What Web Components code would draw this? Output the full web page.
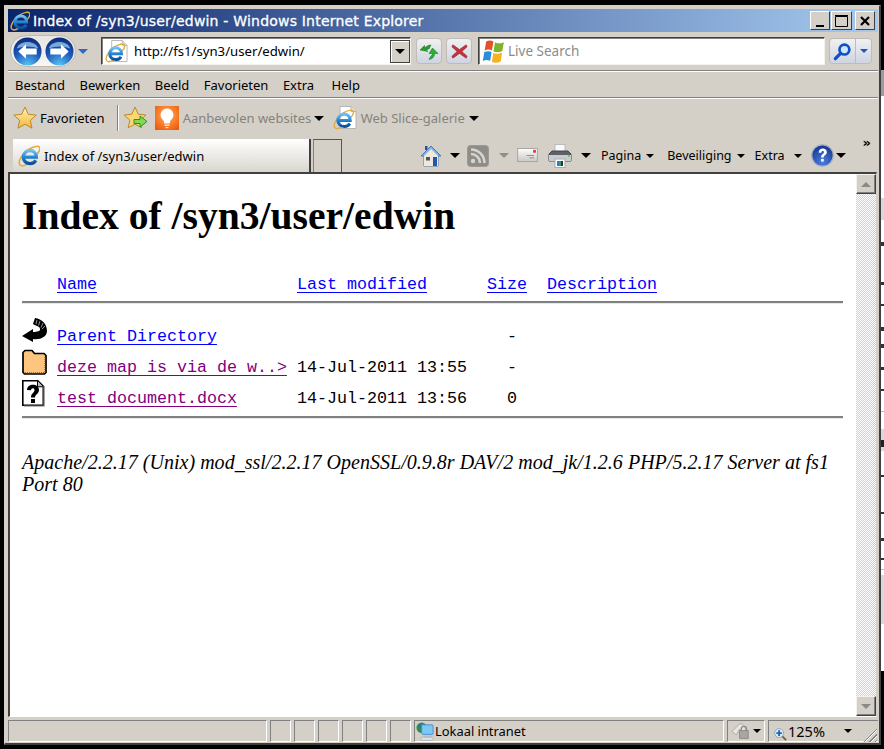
<!DOCTYPE html>
<html><head><meta charset="utf-8"><title>Index of /syn3/user/edwin</title>
<style>html,body{margin:0;padding:0;background:#000;height:749px;overflow:hidden}</style></head>
<body>
<ie-backdrop></ie-backdrop>
<ie-window>
  <ie-titlebar slot="chrome">Index of /syn3/user/edwin - Windows Internet Explorer</ie-titlebar>
  <ie-navbar slot="chrome"></ie-navbar>
  <ie-menubar slot="chrome"></ie-menubar>
  <ie-favbar slot="chrome"></ie-favbar>
  <ie-tabbar slot="chrome"></ie-tabbar>
  <ie-listing slot="content"></ie-listing>
  <ie-statusbar slot="status"></ie-statusbar>
</ie-window>
<script>
const E=(c)=>`<path d="M2 21.500C-.5 18 5 9 12 4.500c5-3 10.500-4 11.500-2 1 2-1 5.500-3 7.500" fill="none" stroke="#e3ad3a" stroke-width="1.700"/><path d="M2 21.500c1.500 2 5.500 1 8.500-1" fill="none" stroke="#e3ad3a" stroke-width="1.700"/><path d="M7 13.300h13c0-5-3.500-7.300-7-7.300-4 0-7.300 3.300-7.300 7.300 0 4 3.300 7 7.500 7 3 0 5-1.200 6.300-3.500" fill="none" stroke="${c}" stroke-width="3.600"/>`;
const GRAD=`<defs><linearGradient id="e" x1="0" y1="0" x2="0" y2="1"><stop offset="0" stop-color="#6fc0f0"/><stop offset=".55" stop-color="#1f7fd0"/><stop offset="1" stop-color="#0d4f9c"/></linearGradient><radialGradient id="b" cx=".5" cy="1" r="1"><stop offset="0" stop-color="#58c8f7"/><stop offset=".55" stop-color="#1d58b8"/><stop offset="1" stop-color="#0b2a78"/></radialGradient></defs>`;
const ICONS = {
ie:`<svg viewBox="0 0 24 24" width="100%" height="100%">${GRAD}${E('url(#e)')}</svg>`,
iepage:`<svg viewBox="0 0 24 24" width="100%" height="100%">${GRAD}<path d="M7 .5h11l5 5v17H7z" fill="#fff" stroke="#b5b5b5"/><path d="M18 .5v5h5" fill="#e4e4e4" stroke="#b5b5b5"/><g transform="translate(0 3) scale(.86)">${E('url(#e)')}</g></svg>`,
star:`<svg viewBox="0 0 24 24" width="100%" height="100%"><defs><linearGradient id="s" x1="0" y1="0" x2="0" y2="1"><stop offset="0" stop-color="#fff2b0"/><stop offset="1" stop-color="#f6b73c"/></linearGradient></defs><path d="M12 1l3.300 7.300 7.900.8-5.900 5.300 1.700 7.800L12 18.200l-7 4 1.700-7.800L.8 9.100l7.900-.8z" fill="url(#s)" stroke="#b98a2c" stroke-linejoin="round"/></svg>`,
staradd:`<svg viewBox="0 0 24 24" width="100%" height="100%"><path d="M11 1l3.200 7.200 7.700.8-5.800 5.200 1.600 7.600L11 18.100l-6.800 3.700 1.700-7.600L.1 9l7.700-.8z" fill="#fbd872" stroke="#b98a2c" stroke-linejoin="round"/><path d="M10 13.500h6V10l7 5.500-7 5.500v-3.500h-6z" fill="#7fdc4a" stroke="#2f8f24"/></svg>`,
bulb:`<svg viewBox="0 0 24 24" width="100%" height="100%"><defs><radialGradient id="o" cx=".5" cy=".4" r=".7"><stop offset="0" stop-color="#ffb060"/><stop offset="1" stop-color="#ef5a08"/></radialGradient></defs><rect width="24" height="24" fill="url(#o)"/><path d="M12 2.500a6.500 6.500 0 0 1 4 11.500c-1 1-1 2-1.200 3.500H9.200C9 16 9 15 8 14A6.500 6.500 0 0 1 12 2.500z" fill="#fff"/><rect x="9.500" y="18.500" width="5" height="1.500" fill="#ffe0c4"/><rect x="10.500" y="21" width="3" height="1.200" fill="#ffe0c4"/></svg>`,
flag:`<svg viewBox="0 0 24 24" width="100%" height="100%"><path d="M4 2.500c3-1.500 5-1 7 0l-1.500 8.500c-2-1-4-1.200-7 0z" fill="#e2532a"/><path d="M12.500 3c3 1.500 5 1.500 8.500 0L19.500 11.500c-3 1.500-5.500 1.500-8.500.5z" fill="#7db52a"/><path d="M2.200 12.500c3-1.200 5-1 7 0L7.800 21c-2-1-4-1.200-7 0z" fill="#2a8fd8"/><path d="M10.800 13.500c3 1 5 1 8.500-.5L18 21.500c-3 1.500-6 1.500-8.500.5z" fill="#f6b21f"/></svg>`,
back:`<svg viewBox="0 0 30 30" width="100%" height="100%">${GRAD}<circle cx="15" cy="15" r="14.500" fill="url(#b)"/><path d="M4 12C6 3 24 3 26 12 20 9 10 9 4 12z" fill="#9ec9f2" opacity=".75"/><path d="M5.500 15l8-7.500v4.500h11v6h-11v4.500z" fill="#fff"/></svg>`,
fwd:`<svg viewBox="0 0 30 30" width="100%" height="100%">${GRAD}<circle cx="15" cy="15" r="14.500" fill="url(#b)"/><path d="M4 12C6 3 24 3 26 12 20 9 10 9 4 12z" fill="#9ec9f2" opacity=".75"/><path d="M24.500 15l-8-7.500v4.500h-11v6h11v4.500z" fill="#fff"/></svg>`,
refresh:`<svg viewBox="0 0 20 20" width="100%" height="100%"><path d="M1 9l4.500-4.500.5 2.500c1.500-2 3.500-3 6-3L10 8c-1 0-2 .4-2.500 1.400l1.500 1.100z" fill="#2c9b2c" stroke="#176b17" stroke-width=".5"/><path d="M13.500 7L19 12.500h-3.300c-.2 3-2 5.500-5.700 6l2-3.500c1-.5 1.400-1.500 1.500-2.500H10z" fill="#26b233" stroke="#176b17" stroke-width=".5"/></svg>`,
stop:`<svg viewBox="0 0 20 20" width="100%" height="100%"><path d="M3 3l7 5 7-5 1 2-5.500 5 5.500 5-1 2-7-5-7 5-1-2 5.500-5L2 5z" fill="#c5343a" stroke="#8c1d22" stroke-width=".6"/></svg>`,
search:`<svg viewBox="0 0 20 20" width="100%" height="100%"><circle cx="12" cy="8" r="5.200" fill="#cfe6ff" stroke="#0f50c8" stroke-width="2.800"/><path d="M8 12l-5.500 5.500" stroke="#0f50c8" stroke-width="3.500" stroke-linecap="round"/></svg>`,
home:`<svg viewBox="0 0 22 22" width="100%" height="100%"><path d="M5 1h2.500v4H5z" fill="#2b4fb0"/><path d="M11 1L1 11h3v10h14V11h3z" fill="#7fb2e6" stroke="#5178a8"/><path d="M4 11l7-7 7 7v10H4z" fill="#eee9dc"/><rect x="6" y="12" width="4" height="3.500" fill="#555"/><rect x="13" y="12" width="4" height="9" fill="#2456b0"/></svg>`,
rss:`<svg viewBox="0 0 22 22" width="100%" height="100%"><rect x=".5" y=".5" width="21" height="21" rx="3" fill="#8f8d87" stroke="#9b9992"/><circle cx="6" cy="16" r="2.200" fill="#d6d4cf"/><path d="M4 9a9 9 0 0 1 9 9M4 4.500a13.500 13.500 0 0 1 13.500 13.500" fill="none" stroke="#d6d4cf" stroke-width="2.600"/></svg>`,
mail:`<svg viewBox="0 0 22 16" width="100%" height="100%"><defs><linearGradient id="m" x1="0" y1="0" x2="0" y2="1"><stop offset="0" stop-color="#fff"/><stop offset="1" stop-color="#c9c7c2"/></linearGradient></defs><rect x=".5" y=".5" width="21" height="14" fill="url(#m)" stroke="#a5a39f"/><rect x="17" y="2" width="3" height="3" fill="#e33"/><path d="M10 8h8M13 10.500h5" stroke="#8b8b8b"/></svg>`,
print:`<svg viewBox="0 0 24 24" width="100%" height="100%"><rect x="7" y=".5" width="10" height="9" fill="#fafafa" stroke="#bbb"/><path d="M1 10l3-3h16l3 3v7H1z" fill="#5d6169" stroke="#44474d"/><rect x="1" y="11" width="22" height="6" fill="#c8cdd2"/><rect x="20" y="11" width="2" height="2" fill="#6fd24a"/><rect x="7" y="15" width="10" height="8.500" fill="#fff" stroke="#aaa"/><rect x="9" y="17" width="2" height="5" fill="#2a7fc0"/><rect x="11" y="17" width="2" height="5" fill="#2a9a70"/><rect x="13" y="17" width="2" height="5" fill="#333"/></svg>`,
help:`<svg viewBox="0 0 24 24" width="100%" height="100%"><defs><radialGradient id="h" cx=".5" cy=".8" r=".8"><stop offset="0" stop-color="#4a7fe0"/><stop offset="1" stop-color="#12328f"/></radialGradient></defs><circle cx="12" cy="12" r="11.200" fill="url(#h)" stroke="#a9b0bd" stroke-width="1.300"/><path d="M8 9c0-5.500 8.500-5.500 8.500-.5 0 3-3.200 3-3.200 5.500h-2.800c0-3.500 3-3.700 3-5.500 0-1.800-2.700-1.600-2.700.5z" fill="#fff"/><rect x="10.500" y="15.500" width="2.800" height="2.800" fill="#fff"/></svg>`,
net:`<svg viewBox="0 0 20 20" width="100%" height="100%"><circle cx="6" cy="6" r="5.500" fill="#2f8f4e"/><path d="M3 3c2-1 4 0 4 2s-3 2-4 1z" fill="#2a6fd0"/><rect x="6" y="3" width="12" height="10" rx="1" fill="#7cc8f5" stroke="#4a90c8"/><rect x="8" y="14" width="9" height="2" fill="#b8c4cf"/><rect x="5" y="16" width="13" height="3.500" rx="1" fill="#d9dfe5" stroke="#8b98a5" stroke-width=".5"/></svg>`,
lock:`<svg viewBox="0 0 22 20" width="100%" height="100%"><path d="M1 10l9-9c5 0 7 4 7 9h-4l-3-3-4 7z" fill="#e9e7e2" stroke="#a5a39e"/><path d="M12 9V7a3 3 0 0 1 6 0v2" fill="none" stroke="#8e8c87" stroke-width="1.600"/><rect x="10" y="9" width="10" height="9" fill="#a8a6a0" stroke="#85837e"/></svg>`,
zoom:`<svg viewBox="0 0 14 14" width="100%" height="100%"><circle cx="5.500" cy="5.500" r="4.800" fill="#dfeaf5" stroke="#8fa5bb"/><path d="M5.500 2.500v6M2.500 5.500h6" stroke="#1768c4" stroke-width="2"/><path d="M9 9l4 4" stroke="#8a5a2b" stroke-width="2"/></svg>`
};
class Base extends HTMLElement{
  render(css,html){this.attachShadow({mode:'open'}).innerHTML=`<style>${css}</style>${html}`;}
}
customElements.define('ie-backdrop',class extends Base{connectedCallback(){
  const band=(a,b,c)=>`linear-gradient(${c},${c}) 0 ${a-70}px/100% ${b-a}px no-repeat`;
  const bg=[[242,246,'#333'],[282,285,'#333'],[304,306,'#333'],[327,331,'#333'],[344,348,'#333'],[367,370,'#333'],[389,391,'#333'],[411,412,'#bbb'],[440,447,'#222'],[475,477,'#333'],[512,514,'#333'],[538,541,'#333'],[558,560,'#333'],[569,570,'#bbb'],[70,96,'#9c9c9c'],[198,220,'#d8d8d8'],[429,451,'#d8d8d8'],[575,624,'#d8d8d8']].map(x=>band(...x)).join(',');
  this.render(`:host{display:block;position:absolute;left:881px;top:70px;width:3px;height:601px;background:${bg},#fff}`,'');
}});
customElements.define('ie-icon',class extends Base{connectedCallback(){
  const w=this.getAttribute('w')||24,h=this.getAttribute('h')||w;
  this.render(`:host{display:block;flex:none;width:${w}px;height:${h}px}`,ICONS[this.getAttribute('name')]);
}});
customElements.define('ie-caret',class extends Base{connectedCallback(){
  const c=this.getAttribute('c')||'#000',s=+(this.getAttribute('s')||5);
  this.render(`:host{display:block;flex:none;width:0;height:0;border-left:${s}px solid transparent;border-right:${s}px solid transparent;border-top:${s}px solid ${c}}`,'');
}});
customElements.define('ie-window',class extends Base{connectedCallback(){
  this.render(`:host{display:flex;position:relative;box-sizing:border-box;width:877px;height:740px;margin:5px 0 0 4px;background:#d4d0c8;border-top:1px solid #d4d0c8;border-left:1px solid #d4d0c8;border-right:2px solid #404040;border-bottom:2px solid #404040;padding:3px 1px 1px 3px;flex-direction:column;font-family:"DejaVu Sans","Liberation Sans",sans-serif}
  .content{flex:none;box-sizing:border-box;height:545px;display:flex;margin:0 1px 3px 0;border-top:2px solid #404040;border-left:2px solid #404040;background:#fff;border-right:1px solid #d4d0c8;border-bottom:1px solid #fff}
  .main{flex:1;min-width:0}
  .bar{flex:none;width:20px;display:flex;flex-direction:column;justify-content:space-between;background:repeating-conic-gradient(#d4d0c8 0 25%,#fff 0 50%) 0 0/2px 2px}
  .btn{height:20px;box-sizing:border-box;background:#d4d0c8;border:1px solid;border-color:#f4f2ee #404040 #404040 #f4f2ee;box-shadow:inset -1px -1px 0 #808080;display:flex;align-items:center;justify-content:center}
  .up{border-left:5px solid transparent;border-right:5px solid transparent;border-bottom:5px solid #8b8983}
  .dn{border-left:5px solid transparent;border-right:5px solid transparent;border-top:5px solid #8b8983}`,
  `<slot name="chrome"></slot><div class="content"><div class="main"><slot name="content"></slot></div><div class="bar"><div class="btn"><i class="up"></i></div><div class="btn"><i class="dn"></i></div></div></div><slot name="status"></slot>`);
}});
customElements.define('ie-titlebar',class extends Base{connectedCallback(){
  this.render(`:host{display:flex;align-items:center;height:23px;background:linear-gradient(90deg,#0a246a,#a6caf0);color:#fff;font-size:14px;padding-left:2px}
  .t{margin-left:3px;flex:1;letter-spacing:.2px;white-space:nowrap;-webkit-text-stroke:.3px #fff}
  .b{width:20px;height:19px;box-sizing:border-box;background:#d4d0c8;border:1px solid;border-color:#fff #404040 #404040 #fff;margin-left:1px;display:flex;align-items:center;justify-content:center;color:#000}
  .btns{display:flex;margin-right:3px}.b:nth-child(2){margin-right:2px;width:21px}
  svg{display:block}`,
  `<ie-icon name="ie" w="20"></ie-icon><span class="t"><slot></slot></span><div class="btns"><div class="b"><svg width="14" height="14"><rect x="3" y="11" width="8" height="2"/></svg></div><div class="b"><svg width="15" height="14"><path d="M1.500 2.500h12v10h-12zM1 1.500h13" fill="none" stroke="#000"/></svg></div><div class="b"><svg width="14" height="14"><path d="M3 3l8 8M11 3l-8 8" stroke="#000" stroke-width="2.200"/></svg></div></div>`);
}});
customElements.define('ie-navbar',class extends Base{connectedCallback(){
  this.render(`:host{display:flex;align-items:center;height:38px;padding-left:2px;border-bottom:1px solid #808080;box-shadow:0 1px 0 #fff;margin-bottom:1px}
  .pill{display:flex;gap:3px;align-items:center;box-sizing:border-box;padding:0 2px;background:linear-gradient(#e8e6e2,#f7f6f3);border:1px solid #bdbab3;border-radius:17px;height:32px;width:66px}
  .drop{margin:0 13px 0 2px}
  .sunk{display:flex;align-items:center;box-sizing:border-box;height:28px;background:#fff;border:1px solid;border-color:#404040 #f4f2ee #f4f2ee #404040;box-shadow:inset 1px 1px 0 #808080;font:13.200px "Noto Sans",sans-serif}
  .addr{width:310px;padding-left:3px}.addr span{flex:1;margin-left:6px;white-space:nowrap}
  .dd{width:20px;height:23px;box-sizing:border-box;background:#d4d0c8;border:1px solid #404040;box-shadow:inset 1px 1px 0 #fff;display:flex;align-items:center;justify-content:center}
  .g{display:flex;align-items:center;justify-content:center;box-sizing:border-box;height:26px;width:26px;border:1px solid #bfbcb8;border-radius:4px;background:linear-gradient(#f1f1f1,#cfd4e2)}
  .search{width:347px;padding-left:3px;color:#8b8b8b;margin:0 4px 0 6px}.search span{margin-left:1px;font-size:13.500px}
  .sb{display:flex;height:26px;border:1px solid #bfbcb8;border-radius:4px;box-sizing:border-box;width:43px;background:linear-gradient(#f1f1f1,#cfd4e2)}
  .sb div{display:flex;align-items:center;justify-content:center}.sb div:first-child{width:25px;border-right:1px solid #bfbcb8}.sb div:last-child{flex:1}`,
  `<div class="pill"><ie-icon name="back" w="29"></ie-icon><ie-icon name="fwd" w="29"></ie-icon></div><ie-caret class="drop" c="#2e69c9" s="5"></ie-caret>
  <div class="sunk addr"><ie-icon name="iepage" w="23"></ie-icon><span>http://fs1/syn3/user/edwin/</span><div class="dd"><ie-caret></ie-caret></div></div>
  <div class="g" style="margin-left:5px"><ie-icon name="refresh" w="20"></ie-icon></div><div class="g" style="margin-left:4px"><ie-icon name="stop" w="19"></ie-icon></div>
  <div class="sunk search"><ie-icon name="flag" w="25"></ie-icon><span>Live Search</span></div>
  <div class="sb"><div><ie-icon name="search" w="19"></ie-icon></div><div><ie-caret c="#1556c8" s="4"></ie-caret></div></div>`);
}});
customElements.define('ie-menubar',class extends Base{connectedCallback(){
  this.render(`:host{display:flex;align-items:center;height:25px;padding-left:7px;gap:14.500px;border-bottom:1px solid #808080;box-shadow:0 1px 0 #fff;font:13px "Noto Sans",sans-serif;color:#000}`,
  `<span>Bestand</span><span>Bewerken</span><span>Beeld</span><span>Favorieten</span><span>Extra</span><span style="margin-left:3px">Help</span>`);
}});
customElements.define('ie-favbar',class extends Base{connectedCallback(){
  this.render(`:host{display:flex;align-items:center;height:40px;padding-left:5px;font:13px "Noto Sans",sans-serif;color:#000}
  .sep{width:1px;height:26px;background:#808080;box-shadow:1px 0 0 #fff;margin:0 6px 0 12px}
  .gray{color:#85837e;white-space:nowrap}`,
  `<ie-icon name="star" w="24"></ie-icon><span style="margin-left:3px">Favorieten</span><i class="sep"></i><ie-icon name="staradd" w="24"></ie-icon>
  <ie-icon name="bulb" w="24" style="margin-left:7px"></ie-icon><span class="gray" style="margin-left:4px;width:126px">Aanbevolen websites</span><ie-caret style="margin:0 9px 0 5px"></ie-caret>
  <ie-icon name="iepage" w="24"></ie-icon><span class="gray" style="margin-left:4px;width:103px">Web Slice-galerie</span><ie-caret style="margin-left:5px"></ie-caret>`);
}});
customElements.define('ie-tabbar',class extends Base{connectedCallback(){
  this.render(`:host{display:flex;align-items:flex-end;height:34px;padding-left:5px;font:12.500px "Noto Sans",sans-serif;color:#000}
  .tab{display:flex;align-items:center;box-sizing:border-box;width:298px;height:33px;padding-left:5px;gap:4px;background:linear-gradient(#fff,#d9d6cf);border-right:2px solid #404040;font-size:13px}
  .new{box-sizing:border-box;width:29px;height:33px;margin-left:2px;border:1px solid #555;border-bottom:0;background:#d4d0c8;border-left-color:#808080}
  .tools{display:flex;align-items:center;height:33px;flex:1;padding-left:78px}
  .more{font:700 13px "DejaVu Sans",sans-serif;align-self:flex-start;margin-left:auto;margin-right:7px;line-height:12px;margin-top:-2px}
  .l{white-space:nowrap}`,
  `<div class="tab"><ie-icon name="ie" w="22"></ie-icon><span>Index of /syn3/user/edwin</span></div><div class="new"></div>
  <div class="tools"><ie-icon name="home" w="22"></ie-icon><ie-caret style="margin:0 7px 0 8px"></ie-caret><ie-icon name="rss" w="22"></ie-icon><ie-caret c="#8f8d87" style="margin:0 8px 0 10px"></ie-caret><ie-icon name="mail" w="21" h="15"></ie-icon><ie-icon name="print" w="24" style="margin-left:10px"></ie-icon><ie-caret style="margin:0 10px 0 9px"></ie-caret>
  <span class="l">Pagina</span><ie-caret s="4" style="margin:0 13px 0 5px"></ie-caret><span class="l">Beveiliging</span><ie-caret s="4" style="margin:0 10px 0 5px"></ie-caret><span class="l">Extra</span><ie-caret s="4" style="margin:0 9px 0 9px"></ie-caret><ie-icon name="help" w="23"></ie-icon><ie-caret s="5" style="margin-left:2px"></ie-caret><span class="more">»</span></div>`);
}});
customElements.define('ie-listing',class extends Base{connectedCallback(){
  const ICON2={
   back:`<svg viewBox="0 0 25 27" width="25" height="27"><path d="M0 18L11 11v3c4 0 8-1 7-3 0-3-4-3-7-5l2-6c7 1 12 6 12 13 0 6-7 9-14 8v3z" fill="#000"/><path d="M15 2l-1 4M18 3l-1.500 4.500M21 5l-2 4.500M23 8l-3 3" stroke="#999" stroke-width="1"/></svg>`,
   folder:`<svg viewBox="0 0 25 27" width="25" height="27"><path d="M1 7V3.500L3 1.500h7l2.500 3h9.500l2 2v17l-1.500 1.500H2.500L1 23.500z" fill="#fdc57f" stroke="#000" stroke-width="1.700" stroke-linejoin="round"/><path d="M3 23.500h19M22.800 8v15" stroke="#a06a2c" stroke-dasharray="1 1"/></svg>`,
   q:`<svg viewBox="0 0 23 27" width="23" height="27"><path d="M.8.8h15l5.500 5.500v19H.8z" fill="#fff" stroke="#000" stroke-width="1.600"/><path d="M15.500 1v5.800H21" fill="#bbb" stroke="#000"/><path d="M22 6v20H2" fill="none" stroke="#777" stroke-width="1.200"/><path d="M5 10c0-7 12-7 12 0 0 4-4 4-4 7.500H9C9 13 12.500 13 12.500 10c0-2.500-3.500-2.500-3.500.3z" fill="#000"/><rect x="9" y="19" width="4" height="4" fill="#000"/></svg>`};
  const row=(icon,name,date,size,cls)=>`<div class="row"><span class="i">${ICON2[icon]}</span><span class="n"><a class="${cls}">${name}</a></span><span class="d">${date}</span><span class="s">${size}</span></div>`;
  this.render(`:host{display:block;padding:0 12px;color:#000;font:20px "Liberation Serif",serif}
  h1{font:700 39.600px/46px "Liberation Serif",serif;margin:19px 0 0;white-space:nowrap}
  .wrap{font:16.670px/20px "Liberation Mono",monospace;margin-top:37px}
  .row{display:flex;align-items:flex-end;height:31px;white-space:pre}
  .hd{height:20px}
  .i{width:35px;height:27px;display:block;margin-bottom:3px}.i svg{display:block}
  .n{width:240px}.d{width:190px}.s{width:60px}
  a{color:#00f;text-decoration:underline;text-underline-offset:3px}a.v{color:#800080}
  .row>span:not(.i){position:relative;top:-1px}
  hr{margin:5px 0 0;height:2px;border:0;background:#808080;box-shadow:0 1px 0 #e8e8e8;width:821px}
  .rows{margin-top:14px}
  address{font:italic 20px/22px "Liberation Serif",serif;letter-spacing:.02px;margin-top:33px;width:821px}`,
  `<h1>Index of /syn3/user/edwin</h1><div class="wrap"><div class="row hd"><span class="i" style="height:0"></span><span class="n"><a>Name</a></span><span class="d"><a>Last modified</a></span><span class="s"><a>Size</a></span><span><a>Description</a></span></div><hr>
  <div class="rows">${row('back','Parent Directory','','  -','')}${row('folder','deze map is via de w..&gt;','14-Jul-2011 13:55','  -','v')}${row('q','test document.docx','14-Jul-2011 13:56','  0','v')}</div><hr style="margin-top:6px">
  <address>Apache/2.2.17 (Unix) mod_ssl/2.2.17 OpenSSL/0.9.8r DAV/2 mod_jk/1.2.6 PHP/5.2.17 Server at fs1 Port 80</address></div>`);
}});
customElements.define('ie-statusbar',class extends Base{connectedCallback(){
  this.render(`:host{display:flex;height:22px;gap:3px;font:12.900px "Noto Sans",sans-serif;color:#000;margin-right:1px;position:relative}
  div{box-sizing:border-box;border:1px solid;border-color:#808080 #fff #fff #808080;display:flex;align-items:center;flex:none}
  .c{width:21px}
  .grip{position:absolute;right:0;bottom:0;width:14px;height:14px;background:repeating-linear-gradient(135deg,#d4d0c8 0 2px,#808080 2px 3px,#fff 3px 4px);clip-path:polygon(100% 0,100% 100%,0 100%)}`,
  `<div style="width:259px"></div><div class="c"></div><div class="c"></div><div class="c"></div><div class="c"></div><div class="c"></div><div class="c"></div>
  <div style="width:310px;padding-left:1px"><ie-icon name="net" w="19"></ie-icon><span>Lokaal intranet</span></div>
  <div style="width:38px;padding-left:3px;gap:3px"><ie-icon name="lock" w="19" h="17"></ie-icon><ie-caret s="4"></ie-caret></div>
  <div style="width:110px;padding-left:5px;border-right:0;font-size:14.500px"><ie-icon name="zoom" w="13"></ie-icon><span style="margin-left:1px;width:56px">125%</span><ie-caret s="4"></ie-caret></div><i class="grip"></i>`);
}});
</script>
</body></html>
